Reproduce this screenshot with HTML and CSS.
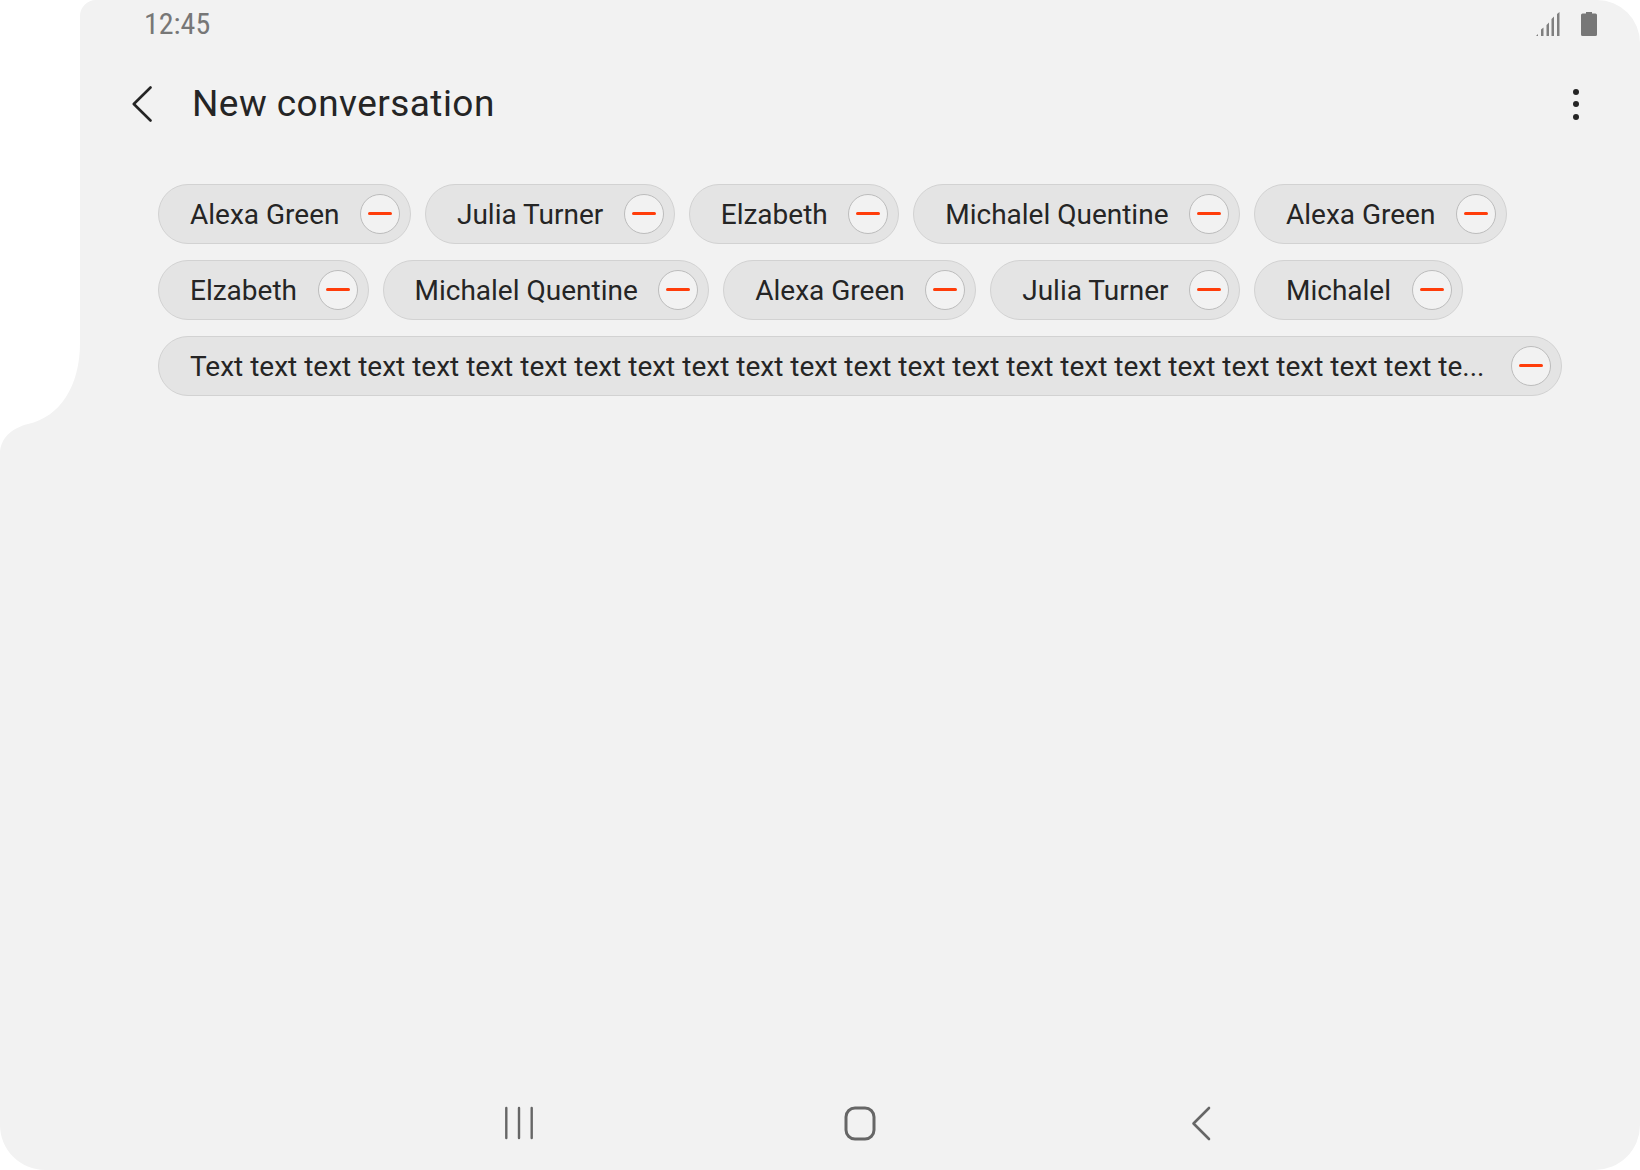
FILE: index.html
```html
<!DOCTYPE html>
<html lang="en">
<head>
    <meta charset="UTF-8">
    <title>New conversation</title>
    <link rel="stylesheet" href="styles.css">
</head>
<body>
    <div class="screen">
        <!-- device outline with the camera cut-out -->
        <svg class="screen-shape" width="1640" height="1170" viewBox="0 0 1640 1170">
            <path d="M96 0H1597A43 43 0 0 1 1640 43V1125A45 45 0 0 1 1595 1170H45A45 45 0 0 1 0 1125V454C0 438 12 428 28 424C60 417 80 386 80 343V16A16 16 0 0 1 96 0Z" fill="#f2f2f2"/>
        </svg>

        <div class="status-bar">
            <span class="time">12:45</span>
            <div class="status-icons">
                <svg width="24" height="24" viewBox="0 0 24 24">
                    <path d="M0 24L2 22V24Z M5 24V17.5L7.5 15.5V24Z M10.5 24V13L13 10.5V24Z M15.5 24V7L18 4.500V24Z M21 24V2L23.500 0V24Z" fill="#808080"/>
                </svg>
                <svg width="16" height="24" viewBox="0 0 16 24">
                    <path d="M5 0H11V1.500H14.500A1.500 1.500 0 0 1 16 3V22.500A1.500 1.500 0 0 1 14.500 24H1.500A1.500 1.500 0 0 1 0 22.500V3A1.500 1.500 0 0 1 1.500 1.500H5Z" fill="#777"/>
                </svg>
            </div>
        </div>

        <div class="app-bar">
            <svg class="back" width="20" height="36" viewBox="0 0 20 36">
                <path d="M18.500 1.500L1.800 18L18.500 34.500" fill="none" stroke="#252525" stroke-width="2.600" stroke-linecap="round" stroke-linejoin="round"/>
            </svg>
            <h1 class="title">New conversation</h1>
            <div class="more">
                <span class="dot"></span>
                <span class="dot"></span>
                <span class="dot"></span>
            </div>
        </div>

        <div class="chips">
            <div class="chip"><span class="chip-name">Alexa Green</span><span class="chip-remove"></span></div>
            <div class="chip"><span class="chip-name">Julia Turner</span><span class="chip-remove"></span></div>
            <div class="chip"><span class="chip-name">Elzabeth</span><span class="chip-remove"></span></div>
            <div class="chip"><span class="chip-name">Michalel Quentine</span><span class="chip-remove"></span></div>
            <div class="chip"><span class="chip-name">Alexa Green</span><span class="chip-remove"></span></div>
            <div class="chip"><span class="chip-name">Elzabeth</span><span class="chip-remove"></span></div>
            <div class="chip"><span class="chip-name">Michalel Quentine</span><span class="chip-remove"></span></div>
            <div class="chip"><span class="chip-name">Alexa Green</span><span class="chip-remove"></span></div>
            <div class="chip"><span class="chip-name">Julia Turner</span><span class="chip-remove"></span></div>
            <div class="chip"><span class="chip-name">Michalel</span><span class="chip-remove"></span></div>
            <div class="chip chip-long"><span class="chip-name">Text text text text text text text text text text text text text text text text text text text text text text text te...</span><span class="chip-remove"></span></div>
        </div>

        <div class="nav-bar">
            <svg width="40" height="40" viewBox="0 0 40 40">
                <path d="M7.300 5V35M20 5V35M32.700 5V35" fill="none" stroke="#666" stroke-width="2.400" stroke-linecap="round"/>
            </svg>
            <svg width="40" height="40" viewBox="0 0 40 40">
                <rect x="6" y="5" width="28" height="31" rx="9" fill="none" stroke="#666" stroke-width="3"/>
            </svg>
            <svg width="40" height="40" viewBox="0 0 40 40">
                <path d="M28 5L12.500 20.500L28 36" fill="none" stroke="#666" stroke-width="2.600" stroke-linecap="round" stroke-linejoin="round"/>
            </svg>
        </div>
    </div>
</body>
</html>
```

FILE: styles.css
```css
body {
    margin: 0;
    background-color: white;
    font-family: 'Roboto', sans-serif;
    color: #252525;
}
.screen {
    position: relative;
    width: 1640px;
    height: 1170px;
    display: flex;
    flex-direction: column;
    overflow: hidden;
}
.screen-shape {
    position: absolute;
    top: 0;
    left: 0;
}
.status-bar, .app-bar, .chips, .nav-bar {
    position: relative;
}
.status-bar {
    box-sizing: border-box;
    height: 48px;
    padding: 0 43px 0 144px;
    display: flex;
    justify-content: space-between;
    align-items: center;
}
.time {
    font-size: 30px;
    color: #777;
    font-stretch: 75%;
    margin-bottom: 2px;
    white-space: nowrap;
}
.status-icons {
    display: flex;
    gap: 21px;
    align-items: center;
}
.app-bar {
    height: 112px;
    padding: 0 61px 0 132px;
    display: flex;
    align-items: center;
}
.back {
    margin-right: 40px;
}
.title {
    margin: 0 0 2px;
    font-size: 37px;
    font-weight: 400;
    letter-spacing: 0.45px;
    flex: 1;
}
.more {
    display: flex;
    flex-direction: column;
    gap: 6.500px;
}
.dot {
    width: 6px;
    height: 6px;
    border-radius: 50%;
    background-color: #252525;
}
.chips {
    padding: 24px 77px 0 158px;
    display: flex;
    flex-wrap: wrap;
    gap: 16px 14px;
}
.chip {
    box-sizing: border-box;
    height: 60px;
    padding: 0 10px 0 31px;
    display: flex;
    align-items: center;
    gap: 20.500px;
    background-color: #e4e4e4;
    border: 1px solid #d2d2d2;
    border-radius: 30px;
}
.chip-long {
    gap: 27px;
}
.chip-name {
    padding-top: 1px;
    font-size: 28px;
    white-space: nowrap;
}
.chip-remove {
    position: relative;
    box-sizing: border-box;
    flex-shrink: 0;
    width: 40px;
    height: 40px;
    background-color: #f2f2f2;
    border: 1px solid #bcbcbc;
    border-radius: 50%;
}
.chip-remove::after {
    content: "";
    position: absolute;
    top: 17px;
    left: 7px;
    width: 24px;
    height: 3px;
    border-radius: 2px;
    background-color: #ff3d0a;
}
.nav-bar {
    margin-top: auto;
    padding: 0 0 27px 499px;
    display: flex;
    gap: 301px;
}
```
